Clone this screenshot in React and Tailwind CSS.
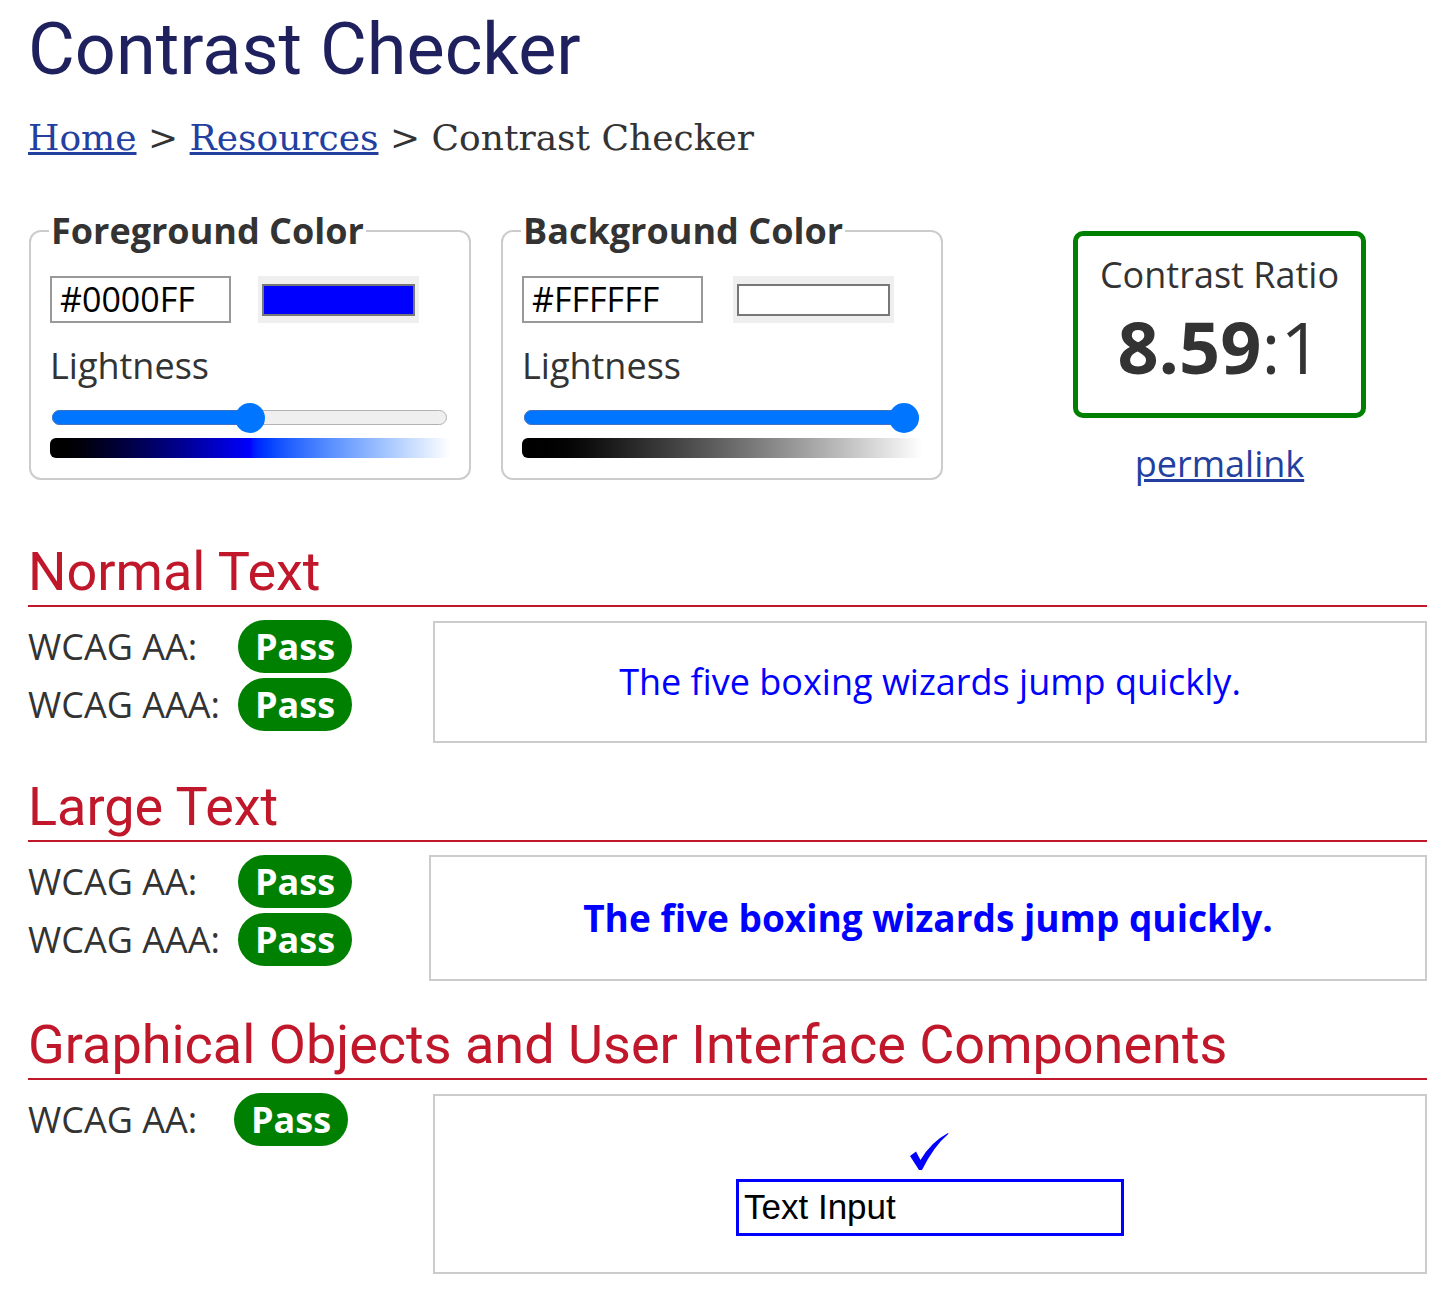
import React from "react";

// one color picker block (fieldset with legend)
const ColorBlock = ({ title, hex, swatch, value, gradient, swatchGap }) => (
  <fieldset className="w-[442px] rounded-[12px] border-2 border-[#cccccc] p-0 m-0">
    <legend className="ml-[18px] px-[2px] text-[36px] leading-[48px] font-bold text-[#333]">
      {title}
    </legend>
    <div className="pt-[21px] pl-[19px] pr-[19px] pb-[20px]">
      <div className="flex items-center">
        <div className="w-[181px] h-[47px] border-2 border-[#999] pl-[8px] flex items-center text-[34px] text-black">
          {hex}
        </div>
        <div
          className={
            "w-[161px] h-[47px] bg-[#efefef] flex items-center justify-center " +
            (swatchGap ? "ml-[30px]" : "ml-[27px]")
          }
        >
          <div className={"w-[153px] h-[32px] border-2 border-[#777] " + swatch} />
        </div>
      </div>

      <div className="mt-[19px] text-[36px] leading-[48px] text-[#333]">Lightness</div>

      {/* slider */}
      <div className="relative mt-[13px] h-[30px] ml-[2px] mr-[3px]">
        <div className="absolute left-0 right-0 top-[7px] h-[15px] rounded-full border border-[#b2b2b2] bg-[#efefef]" />
        <div
          className="absolute left-0 top-[7px] h-[15px] rounded-full bg-[#0075ff] border border-[#3f72c4]"
          style={{ width: `calc(${value}% - ${value * 0.3 - 15}px)` }}
        />
        <div
          className="absolute top-0 w-[30px] h-[30px] rounded-full bg-[#0075ff]"
          style={{ left: `calc(${value}% - ${value * 0.3}px)` }}
        />
      </div>

      <div className={"mt-[5px] h-[20px] rounded-l-[6px] " + gradient} />
    </div>
  </fieldset>
);

const Pass = () => (
  <span className="inline-flex items-center justify-center w-[114px] h-[53px] rounded-full bg-[#008000] text-white font-bold text-[36px] leading-none">
    Pass
  </span>
);

const Row = ({ label, labelW }) => (
  <div className="flex items-center h-[53px]">
    <span className={"text-[36px] text-[#333] " + labelW}>{label}</span>
    <Pass />
  </div>
);

const SectionTitle = ({ children, top }) => (
  <h2
    className={
      "font-['Roboto',sans-serif] text-[54px] leading-[54px] text-[#c0172b] pb-[6px] border-b-2 border-[#c0172b] " +
      top
    }
  >
    {children}
  </h2>
);

const App = () => {
  return (
    <div className="min-h-screen bg-white pl-[28px] pr-[23px] font-['Open_Sans',sans-serif] text-[#333]">
      {/* Title */}
      <h1 className="pt-[14px] font-['Roboto',sans-serif] text-[72px] leading-[72px] text-[#1f205e]">
        Contrast Checker
      </h1>

      {/* Breadcrumb */}
      <nav className="mt-[34px] font-['DejaVu_Serif',serif] text-[36px] leading-[36px] text-[#333]">
        <a href="#" className="text-[#2340a0] underline">Home</a>
        {" > "}
        <a href="#" className="text-[#2340a0] underline">Resources</a>
        {" > "}
        Contrast Checker
      </nav>

      {/* Pickers + ratio */}
      <div className="mt-[51px] flex items-start ml-px">
        <ColorBlock
          title="Foreground Color"
          hex="#0000FF"
          swatch="bg-[#0000ff]"
          value={50}
          gradient="bg-linear-to-r from-black via-[#0000ff] to-white"
        />
        <div className="ml-[30px]">
          <ColorBlock
            title="Background Color"
            hex="#FFFFFF"
            swatch="bg-white"
            value={100}
            swatchGap
            gradient="bg-linear-to-r from-black to-white"
          />
        </div>

        <div className="ml-[130px] mt-[24px] flex flex-col items-center">
          <div className="w-[293px] h-[187px] border-[5px] border-[#008000] rounded-[10px] flex flex-col items-center pt-[15px]">
            <div className="text-[36px] leading-[48px] text-[#333]">Contrast Ratio</div>
            <div className="mt-[11px] text-[72px] leading-[72px] text-[#333]">
              <span className="font-bold">8.59</span>:1
            </div>
          </div>
          <a href="#" className="mt-[22px] text-[36px] leading-[48px] text-[#2340a0] underline">
            permalink
          </a>
        </div>
      </div>

      {/* Normal Text */}
      <SectionTitle top="mt-[57px]">Normal Text</SectionTitle>
      <div className="mt-[13px] flex items-start">
        <div className="w-[405px] flex flex-col gap-[5px]">
          <Row label="WCAG AA:" labelW="w-[210px]" />
          <Row label="WCAG AAA:" labelW="w-[210px]" />
        </div>
        <div className="mt-px flex-1 h-[122px] border-2 border-[#cccccc] flex items-center justify-center">
          <p className="text-[36px] text-[#0000ff]">The five boxing wizards jump quickly.</p>
        </div>
      </div>

      {/* Large Text */}
      <SectionTitle top="mt-[37px]">Large Text</SectionTitle>
      <div className="mt-[13px] flex items-start">
        <div className="w-[401px] flex flex-col gap-[5px]">
          <Row label="WCAG AA:" labelW="w-[210px]" />
          <Row label="WCAG AAA:" labelW="w-[210px]" />
        </div>
        <div className="flex-1 h-[126px] border-2 border-[#cccccc] flex items-center justify-center">
          <p className="text-[37px] font-bold text-[#0000ff]">The five boxing wizards jump quickly.</p>
        </div>
      </div>

      {/* Graphical Objects */}
      <SectionTitle top="mt-[37px]">Graphical Objects and User Interface Components</SectionTitle>
      <div className="mt-[13px] flex items-start">
        <div className="w-[405px]">
          <Row label="WCAG AA:" labelW="w-[206px]" />
        </div>
        <div className="mt-px flex-1 h-[180px] border-2 border-[#cccccc] flex flex-col items-center pt-[37px]">
          <svg width="40" height="38" viewBox="0 0 40 38" className="ml-[-2px]">
            <path
              d="M1 23 L7 18.5 L11.5 27 Q22 9 39 0 L39.5 0.8 Q25 13 13 37 L10 37 Z"
              fill="#0000ff"
            />
          </svg>
          <div className="mt-[8px] w-[388px] h-[57px] border-[3px] border-[#0000ff] pl-[5px] flex items-center font-['Liberation_Sans',Arial,sans-serif] text-[35px] text-black">
            Text Input
          </div>
        </div>
      </div>
    </div>
  );
};

export default App;
